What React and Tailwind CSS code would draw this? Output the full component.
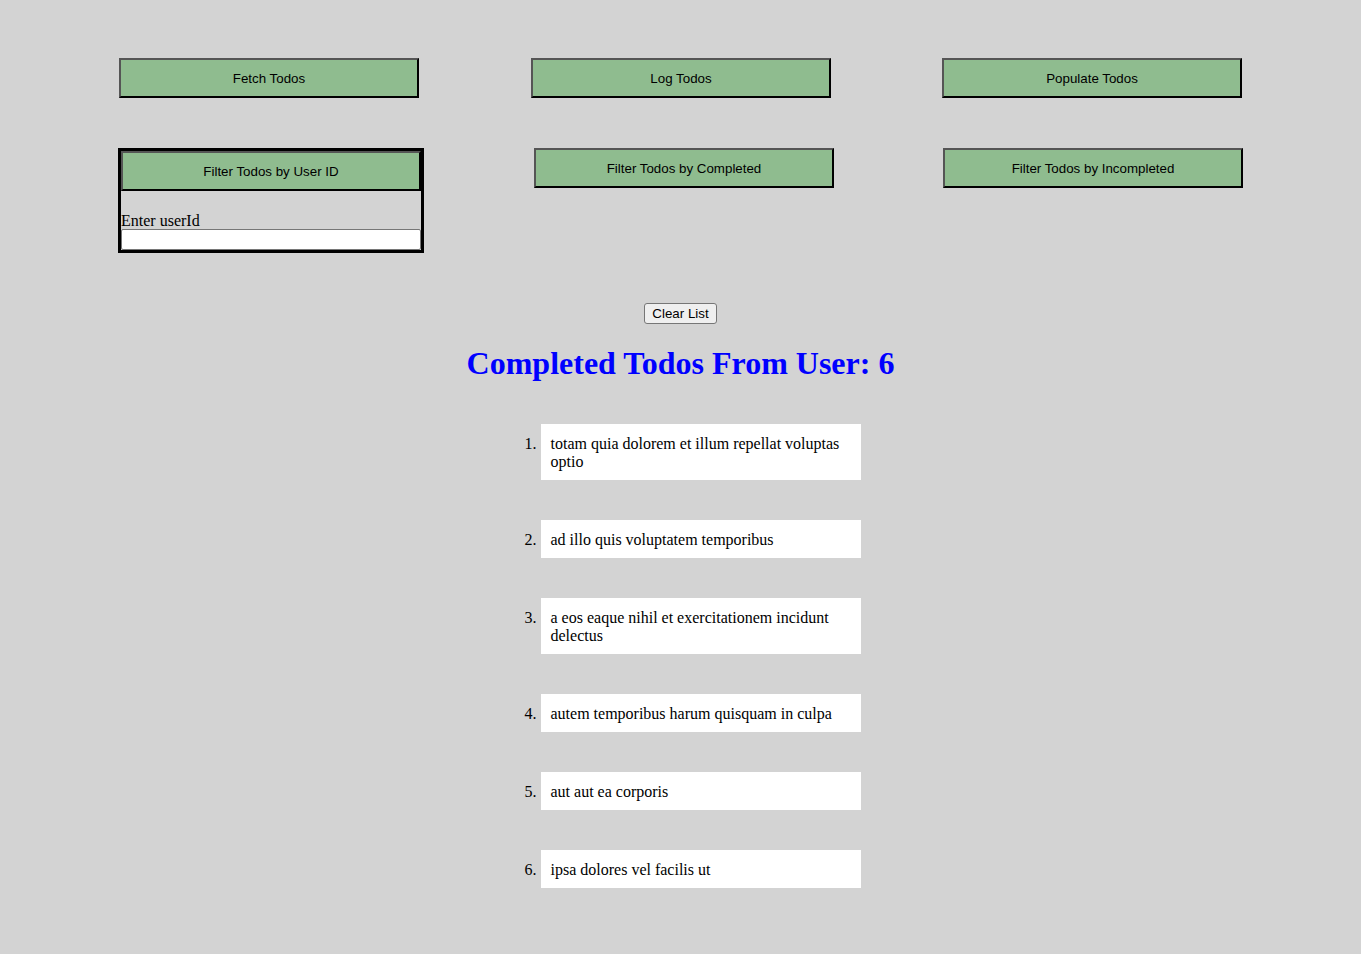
import { useState } from 'react';

const todos = [
  'totam quia dolorem et illum repellat voluptas optio',
  'ad illo quis voluptatem temporibus',
  'a eos eaque nihil et exercitationem incidunt delectus',
  'autem temporibus harum quisquam in culpa',
  'aut aut ea corporis',
  'ipsa dolores vel facilis ut',
];

const btnClass =
  "block w-[300px] h-[40px] pt-[2px] bg-[#8fbc8f] border-2 border-t-[#555] border-l-[#555] border-r-black border-b-black text-[13.333px] leading-none text-black font-['Liberation_Sans',Arial,sans-serif] text-center";

const ActionButton = ({ label, onClick }) => (
  <button type="button" onClick={onClick} className={btnClass}>
    {label}
  </button>
);

const App = () => {
  const [userId, setUserId] = useState('');
  const [items, setItems] = useState(todos);

  return (
    <div className="min-h-screen bg-[#d3d3d3] pt-[58px] font-['Liberation_Serif','Times_New_Roman',serif] text-black">
      <div className="flex pl-[119px]">
        <ActionButton label="Fetch Todos" />
        <div className="ml-[112px]">
          <ActionButton label="Log Todos" />
        </div>
        <div className="ml-[111px]">
          <ActionButton label="Populate Todos" />
        </div>
      </div>

      <div className="flex items-start pl-[118px] mt-[50px]">
        <div className="w-[306px] border-[3px] border-black">
          <ActionButton label="Filter Todos by User ID" />
          <label className="block mt-[21px] text-[16px] leading-[17px]">Enter userId</label>
          <input
            value={userId}
            onChange={(e) => setUserId(e.target.value)}
            className="block w-[300px] h-[21px] bg-white border border-[#767676] rounded-[2px] outline-none text-[13.333px] px-[2px]"
          />
        </div>
        <div className="ml-[110px]">
          <ActionButton label="Filter Todos by Completed" />
        </div>
        <div className="ml-[109px]">
          <ActionButton label="Filter Todos by Incompleted" />
        </div>
      </div>

      <div className="flex justify-center mt-[50px]">
        <button
          type="button"
          onClick={() => setItems([])}
          className="h-[21px] px-[7px] bg-[#efefef] border border-[#767676] rounded-[3px] text-[13.333px] leading-none text-black font-['Liberation_Sans',Arial,sans-serif]"
        >
          Clear List
        </button>
      </div>

      <h1 className="mt-[21px] text-center text-[32px] leading-[36px] font-bold text-[#0000ff]">
        Completed Todos From User: 6
      </h1>

      <ol className="w-[360px] mx-auto mt-[43px] pl-[40px] list-decimal list-outside flex flex-col gap-[40px] pb-[66px]">
        {items.map((t) => (
          <li key={t} className="w-[320px] bg-white pt-[11px] pb-[9px] px-[10px] text-[16px] leading-[18px]">
            {t}
          </li>
        ))}
      </ol>
    </div>
  );
};

export default App;
